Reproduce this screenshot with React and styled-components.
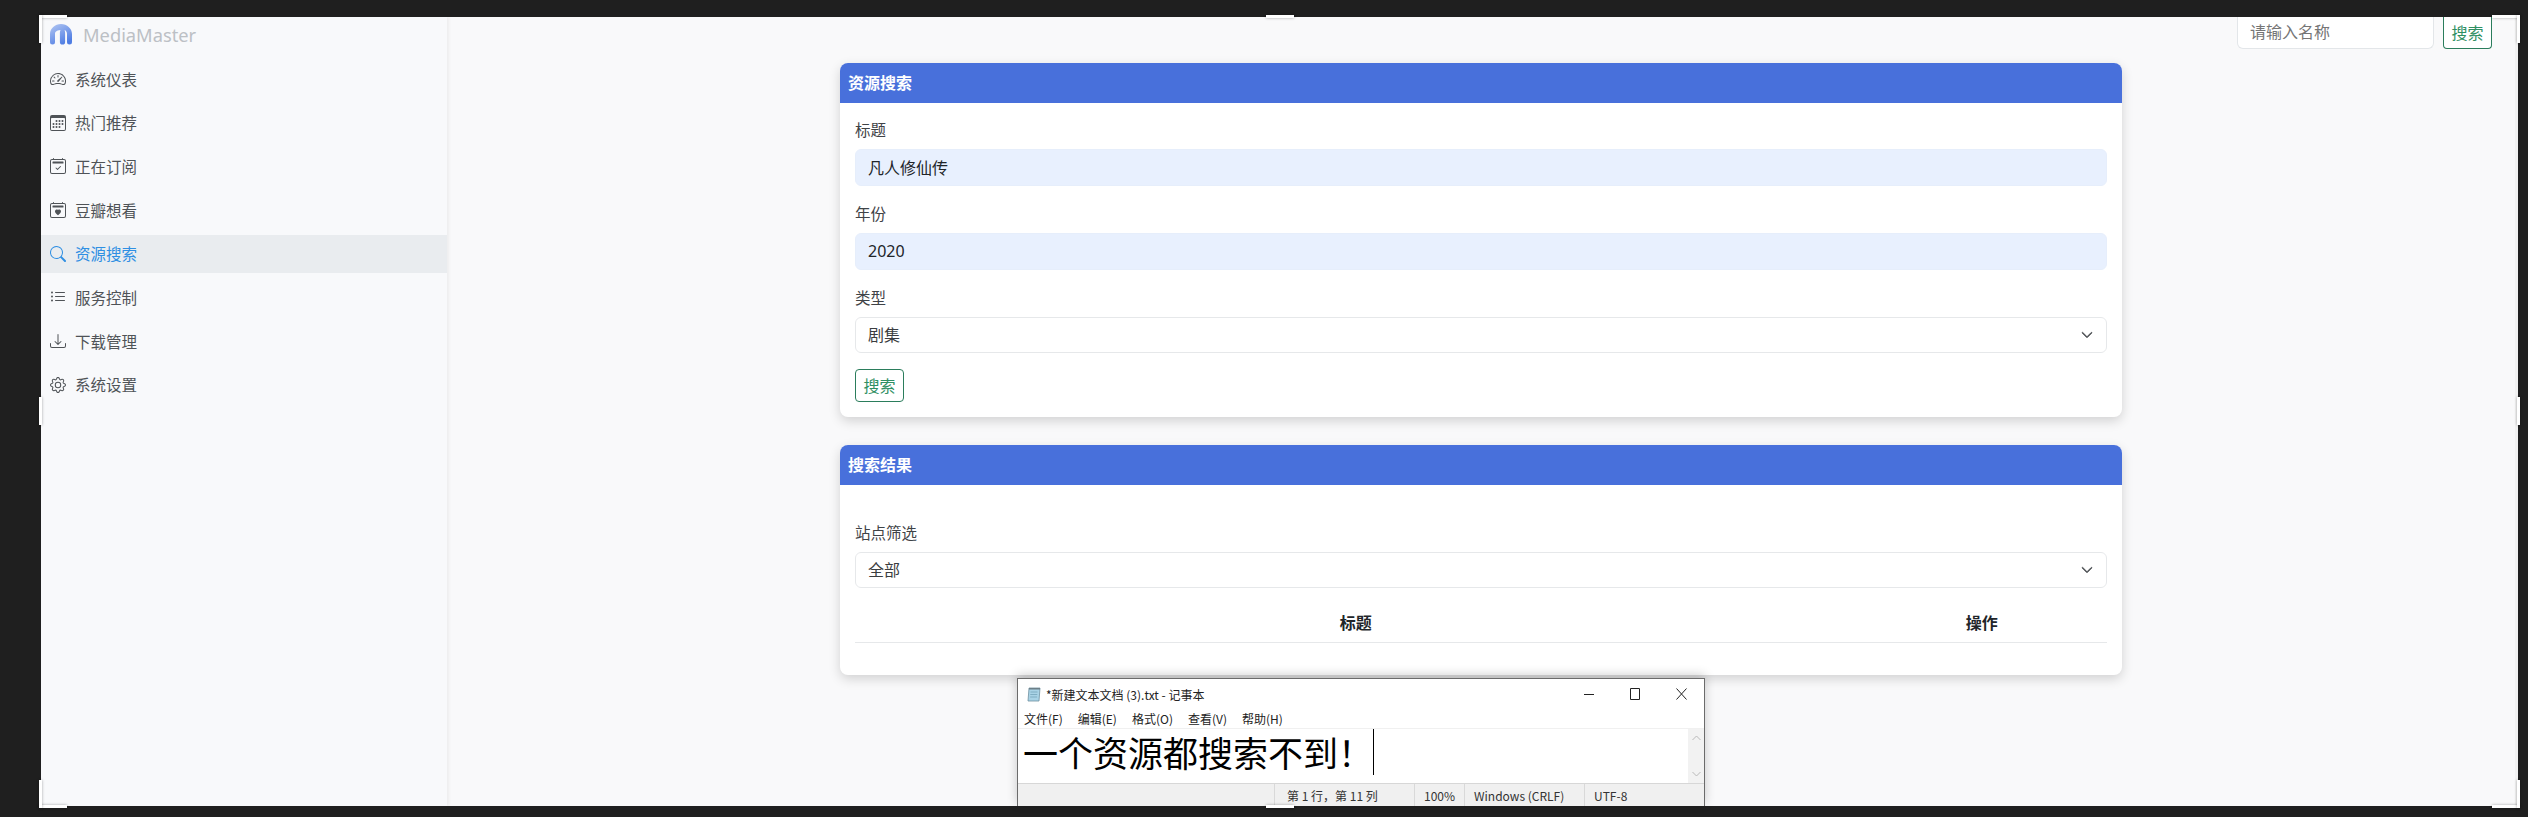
import React from "react";
import styled, { createGlobalStyle } from "styled-components";
import {
  BsSpeedometer2,
  BsCalendar3,
  BsCalendar2Check,
  BsCalendar2Heart,
  BsSearch,
  BsListUl,
  BsDownload,
  BsGear,
  BsChevronDown,
} from "react-icons/bs";

const GlobalStyle = createGlobalStyle`
  html, body {
    margin: 0;
    height: 100%;
    overflow: hidden;
    background: #1f1f1f;
  }
  * {
    box-sizing: border-box;
  }
  body {
    font-family: "Noto Sans", "Noto Sans CJK SC", sans-serif;
    color: #212529;
  }
`;

const NAV_ITEMS = [
  { label: "系统仪表", Icon: BsSpeedometer2 },
  { label: "热门推荐", Icon: BsCalendar3 },
  { label: "正在订阅", Icon: BsCalendar2Check },
  { label: "豆瓣想看", Icon: BsCalendar2Heart },
  { label: "资源搜索", Icon: BsSearch, active: true },
  { label: "服务控制", Icon: BsListUl },
  { label: "下载管理", Icon: BsDownload },
  { label: "系统设置", Icon: BsGear },
];

const Desktop = styled.div`
  height: 817px;
  padding: 17px 10px 11px 41px;
`;

const Frame = styled.div`
  position: relative;
  height: 789px;
`;

const Shell = styled.div`
  display: flex;
  height: 100%;
  overflow: hidden;
  background: #f9f9fa;
`;

const Sidebar = styled.aside`
  flex: 0 0 406px;
  background: #f8f9fb;
  box-shadow: 2px 0 3px rgba(0, 0, 0, 0.05);
`;

const Brand = styled.div`
  display: flex;
  align-items: center;
  gap: 11px;
  height: 43px;
  padding: 0 0 8px 9px;
  font-size: 18.3px;
  color: #bcc0c5;
`;

const NavList = styled.nav`
  display: flex;
  flex-direction: column;
  gap: 5.7px;
`;

const NavItem = styled.a`
  display: flex;
  align-items: center;
  gap: 9px;
  height: 38px;
  padding-left: 9px;
  font-size: 15.5px;
  color: ${(p) => (p.$active ? "#2f8fe3" : "#4f5357")};
  background: ${(p) => (p.$active ? "#e9ecef" : "transparent")};
`;

const Main = styled.main`
  flex: 1;
  min-width: 0;
  border-right: 3px solid #f2f2f2;
`;

const TopBar = styled.div`
  display: flex;
  justify-content: flex-end;
  gap: 9px;
  height: 32px;
  padding-right: 23px;
  margin-bottom: 14px;
`;

const TopInput = styled.input`
  width: 197px;
  height: 32px;
  padding: 0 12px 2px;
  font: inherit;
  font-size: 16px;
  background: #fff;
  border: 1px solid #e3e6e9;
  border-top: 0;
  border-radius: 0 0 6px 6px;
  outline: none;
  &::placeholder {
    color: #757575;
  }
`;

const OutlineButton = styled.button`
  height: ${(p) => (p.$clipped ? "32px" : "33px")};
  width: 49px;
  padding: 0 0 2px;
  font: inherit;
  font-size: 16px;
  color: #2f8f63;
  background: #fff;
  border: 1px solid #2b7d5c;
  border-top-width: ${(p) => (p.$clipped ? 0 : "1px")};
  border-radius: ${(p) => (p.$clipped ? "0 0 4px 4px" : "4px")};
`;

const Card = styled.section`
  width: 1282px;
  margin: 0 auto 28px;
  background: #fff;
  border-radius: 8px;
  overflow: hidden;
  box-shadow: 0 4px 12px rgba(0, 0, 0, 0.16);
`;

const CardHeader = styled.h2`
  display: flex;
  align-items: center;
  height: 40px;
  margin: 0;
  padding: 0 0 2px 8px;
  font-size: 16px;
  font-weight: 700;
  color: #fff;
  background: #4870db;
`;

const CardBody = styled.div`
  display: flex;
  flex-direction: column;
  padding: ${(p) => (p.$spaced ? "36px" : "15px")} 15px ${(p) => (p.$spaced ? "32px" : "15px")};
`;

const Field = styled.div`
  display: flex;
  flex-direction: column;
  gap: 7px;
  margin-bottom: 16px;
`;

const Label = styled.label`
  font-size: 15.5px;
  line-height: 24px;
  color: #3f4347;
`;

const TextInput = styled.input`
  width: 100%;
  height: 37px;
  padding: 0 12px 2px;
  font: inherit;
  font-size: 16px;
  color: #212529;
  background: #e8f0fe;
  border: 1px solid #e6eefb;
  border-radius: 6px;
  outline: none;
`;

const SelectWrap = styled.div`
  position: relative;
  color: #4a4d50;
`;

const Select = styled.select`
  width: 100%;
  height: 36px;
  padding: 0 12px;
  font: inherit;
  font-size: 16px;
  color: #3a3d40;
  background: #fff;
  border: 1px solid #e6e8ea;
  border-radius: 6px;
  appearance: none;
  outline: none;
`;

const Caret = styled(BsChevronDown)`
  position: absolute;
  top: 12px;
  right: 14px;
  width: 12px;
  height: 12px;
  stroke: currentColor;
  stroke-width: 1.2;
  pointer-events: none;
`;

const TableHead = styled.div`
  display: grid;
  grid-template-columns: 4fr 1fr;
  height: 39px;
  padding-bottom: 2px;
  align-items: center;
  border-bottom: 1px solid #e6e8ea;
`;

const HeadCell = styled.div`
  font-size: 16px;
  font-weight: 700;
  text-align: center;
  color: #212529;
`;

const Handle = styled.span`
  position: absolute;
  width: ${(p) => (p.$tall ? "3px" : "28px")};
  height: ${(p) => (p.$tall ? "28px" : "3px")};
  background: #fff;
  box-shadow: 0 0 3px rgba(0, 0, 0, 0.35);
`;

const Notepad = styled.div`
  position: absolute;
  left: 976px;
  top: 661px;
  width: 688px;
  height: 128px;
  display: flex;
  flex-direction: column;
  overflow: hidden;
  background: #fff;
  border: 1px solid #6b6b6b;
  border-bottom: 0;
  box-shadow: 0 -3px 10px rgba(0, 0, 0, 0.2);
  font-family: "Noto Sans CJK SC", "Noto Sans", sans-serif;
`;

const NoteTitleBar = styled.div`
  display: flex;
  align-items: center;
  flex: 0 0 30px;
  padding-left: 9px;
  font-size: 12px;
  color: #222;
`;

const NoteTitle = styled.span`
  margin-left: 5px;
  flex: 1;
`;

const WindowButtons = styled.div`
  display: flex;
  color: #222;
`;

const WindowButton = styled.span`
  display: flex;
  align-items: center;
  justify-content: center;
  width: 46px;
  height: 30px;
`;

const NoteMenu = styled.div`
  display: flex;
  align-items: center;
  gap: 15px;
  flex: 0 0 19px;
  padding-left: 6px;
  font-size: 12px;
  color: #222;
`;

const NoteEditor = styled.div`
  display: flex;
  flex: 0 0 55px;
  border-top: 1px solid #f0f0f0;
`;

const NoteText = styled.div`
  flex: 1;
  display: flex;
  align-items: flex-start;
  padding-left: 5px;
  font-size: 35px;
  font-weight: 400;
  line-height: 46px;
  color: #000;
  white-space: nowrap;
`;

const NoteCaret = styled.span`
  width: 1px;
  height: 46px;
  background: #000;
`;

const NoteScroll = styled.div`
  flex: 0 0 16px;
  display: flex;
  flex-direction: column;
  justify-content: space-between;
  padding: 6px 0;
  align-items: center;
  background: #f2f2f2;
  color: #b9b9b9;
`;

const NoteStatus = styled.div`
  display: flex;
  flex: 1;
  font-size: 12px;
  color: #333;
  background: #f0f0f0;
  border-top: 1px solid #d7d7d7;
`;

const StatusCell = styled.span`
  display: flex;
  align-items: center;
  width: ${(p) => p.$w}px;
  padding-left: ${(p) => p.$pad ?? 9}px;
  border-left: ${(p) => (p.$plain ? "0" : "1px solid #d9d9d9")};
`;

const Logo = () => (
  <svg width="22" height="21" viewBox="0 0 22 21">
    <defs>
      <linearGradient id="logoFill" x1="0" y1="0" x2="0.6" y2="1">
        <stop offset="0" stopColor="#b4c8f3" />
        <stop offset="1" stopColor="#4f7de3" />
      </linearGradient>
    </defs>
    <path
      d="M0 18V10C0 4.5 5 0 11 0s11 4.5 11 10v8a2.5 2.5 0 0 1-5 0V10c0-2-1-3.500-2.500-4 .6 1.200.6 2.500.6 4v8a2.600 2.600 0 0 1-5.200 0V10c0-1.500 0-2.800.6-4C6 6.500 5 8 5 10v8a2.500 2.500 0 0 1-5 0z"
      fill="url(#logoFill)"
    />
  </svg>
);

const NoteIcon = () => (
  <svg width="14" height="16" viewBox="0 0 14 16">
    <path d="M2 2h11l-1 13H1z" fill="#a9d3e6" stroke="#6d8fa0" strokeWidth="0.8" />
    <path d="M2 2h11v1.500H2z" fill="#6d7f88" />
    <path d="M3.500 6h7M3.300 8.500h7M3.100 11h7" stroke="#6f9db3" strokeWidth="0.7" />
  </svg>
);

const MinIcon = () => (
  <svg width="10" height="10" viewBox="0 0 10 10">
    <path d="M0 5.500h10" stroke="currentColor" />
  </svg>
);

const MaxIcon = () => (
  <svg width="10" height="12" viewBox="0 0 10 12">
    <path d="M.5.500h9v11h-9z" fill="none" stroke="currentColor" />
  </svg>
);

const CloseIcon = () => (
  <svg width="11" height="12" viewBox="0 0 11 12">
    <path d="M.5.500l10 11M10.500.500l-10 11" fill="none" stroke="currentColor" />
  </svg>
);

const Arrow = ({ up }) => (
  <svg width="9" height="6" viewBox="0 0 9 6">
    <path d={up ? "M.5 5L4.500 1l4 4" : "M.5 1l4 4 4-4"} fill="none" stroke="currentColor" />
  </svg>
);

const App = () => {
  return (
    <Desktop>
      <GlobalStyle />
      <Frame>
        <Shell>
          <Sidebar>
            <Brand>
              <Logo />
              MediaMaster
            </Brand>
            <NavList>
              {NAV_ITEMS.map(({ label, Icon, active }) => (
                <NavItem key={label} $active={active}>
                  <Icon size={16} />
                  {label}
                </NavItem>
              ))}
            </NavList>
          </Sidebar>

          <Main>
            <TopBar>
              <TopInput placeholder="请输入名称" />
              <OutlineButton $clipped>搜索</OutlineButton>
            </TopBar>

            <Card>
              <CardHeader>资源搜索</CardHeader>
              <CardBody>
                <Field>
                  <Label>标题</Label>
                  <TextInput defaultValue="凡人修仙传" />
                </Field>
                <Field>
                  <Label>年份</Label>
                  <TextInput defaultValue="2020" />
                </Field>
                <Field>
                  <Label>类型</Label>
                  <SelectWrap>
                    <Select defaultValue="剧集">
                      <option>剧集</option>
                      <option>电影</option>
                    </Select>
                    <Caret />
                  </SelectWrap>
                </Field>
                <OutlineButton>搜索</OutlineButton>
              </CardBody>
            </Card>

            <Card>
              <CardHeader>搜索结果</CardHeader>
              <CardBody $spaced>
                <Field>
                  <Label>站点筛选</Label>
                  <SelectWrap>
                    <Select defaultValue="全部">
                      <option>全部</option>
                    </Select>
                    <Caret />
                  </SelectWrap>
                </Field>
                <TableHead>
                  <HeadCell>标题</HeadCell>
                  <HeadCell>操作</HeadCell>
                </TableHead>
              </CardBody>
            </Card>
          </Main>
        </Shell>

        <Notepad>
          <NoteTitleBar>
            <NoteIcon />
            <NoteTitle>*新建文本文档 (3).txt - 记事本</NoteTitle>
            <WindowButtons>
              <WindowButton><MinIcon /></WindowButton>
              <WindowButton><MaxIcon /></WindowButton>
              <WindowButton><CloseIcon /></WindowButton>
            </WindowButtons>
          </NoteTitleBar>
          <NoteMenu>
            <span>文件(F)</span>
            <span>编辑(E)</span>
            <span>格式(O)</span>
            <span>查看(V)</span>
            <span>帮助(H)</span>
          </NoteMenu>
          <NoteEditor>
            <NoteText>
              一个资源都搜索不到！
              <NoteCaret />
            </NoteText>
            <NoteScroll>
              <Arrow up />
              <Arrow />
            </NoteScroll>
          </NoteEditor>
          <NoteStatus>
            <StatusCell $w={256} $plain />
            <StatusCell $w={140} $pad={12}>第 1 行，第 11 列</StatusCell>
            <StatusCell $w={50}>100%</StatusCell>
            <StatusCell $w={120}>Windows (CRLF)</StatusCell>
            <StatusCell $w={120}>UTF-8</StatusCell>
          </NoteStatus>
        </Notepad>

        <Handle style={{ left: -2, top: -2 }} />
        <Handle $tall style={{ left: -2, top: -2 }} />
        <Handle style={{ right: -2, top: -2 }} />
        <Handle $tall style={{ right: -2, top: -2 }} />
        <Handle style={{ left: -2, bottom: -2 }} />
        <Handle $tall style={{ left: -2, bottom: -2 }} />
        <Handle style={{ right: -2, bottom: -2 }} />
        <Handle $tall style={{ right: -2, bottom: -2 }} />
        <Handle style={{ left: 1225, top: -2 }} />
        <Handle style={{ left: 1225, bottom: -2 }} />
        <Handle $tall style={{ left: -2, top: 380 }} />
        <Handle $tall style={{ right: -2, top: 380 }} />
      </Frame>
    </Desktop>
  );
};

export default App;
